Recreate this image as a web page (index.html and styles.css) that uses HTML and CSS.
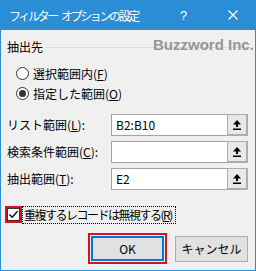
FILE: index.html
```html
<!DOCTYPE html>
<html lang="ja">
<head>
    <meta charset="UTF-8">
    <title>フィルター オプションの設定</title>
    <link rel="stylesheet" href="styles.css">
</head>
<body>
    <div class="dialog">
        <div class="titlebar">
            <span class="title">フィルター <span class="title-gap"></span>オプションの設定</span>
            <span class="help">?</span>
            <span class="close">
                <svg width="10" height="10" viewBox="0 0 10 10">
                    <path d="M0.5 0.5 L9.5 9.5 M9.5 0.5 L0.5 9.5" stroke="#fff" stroke-width="1.2" fill="none"/>
                </svg>
            </span>
        </div>

        <div class="content">
            <div class="group-head">
                <span>抽出先</span>
                <div class="group-line"></div>
            </div>
            <div class="watermark">Buzzword Inc.</div>

            <div class="radio-row">
                <span class="radio"></span>
                <span>選択範囲内(<u>F</u>)</span>
            </div>
            <div class="radio-row">
                <span class="radio checked"></span>
                <span>指定した範囲(<u>O</u>)</span>
            </div>

            <div class="fields">
                <div class="field-row">
                    <label class="field-label">リスト範囲(<u>L</u>):</label>
                    <div class="field-input">B2:B10</div>
                    <div class="ref-button">
                        <svg width="8" height="10" viewBox="0 0 8 10">
                            <polygon points="4,0 8,4.5 0,4.5" fill="#000"/>
                            <rect x="3" y="4" width="2" height="3" fill="#000"/>
                            <rect x="0" y="8.5" width="8" height="1.5" fill="#000"/>
                        </svg>
                    </div>
                </div>
                <div class="field-row">
                    <label class="field-label">検索条件範囲(<u>C</u>):</label>
                    <div class="field-input"></div>
                    <div class="ref-button">
                        <svg width="8" height="10" viewBox="0 0 8 10">
                            <polygon points="4,0 8,4.5 0,4.5" fill="#000"/>
                            <rect x="3" y="4" width="2" height="3" fill="#000"/>
                            <rect x="0" y="8.5" width="8" height="1.5" fill="#000"/>
                        </svg>
                    </div>
                </div>
                <div class="field-row">
                    <label class="field-label">抽出範囲(<u>T</u>):</label>
                    <div class="field-input">E2</div>
                    <div class="ref-button">
                        <svg width="8" height="10" viewBox="0 0 8 10">
                            <polygon points="4,0 8,4.5 0,4.5" fill="#000"/>
                            <rect x="3" y="4" width="2" height="3" fill="#000"/>
                            <rect x="0" y="8.5" width="8" height="1.5" fill="#000"/>
                        </svg>
                    </div>
                </div>
            </div>

            <div class="check-row">
                <div class="mark-box">
                    <span class="checkbox">
                        <svg width="11" height="11" viewBox="0 0 11 11">
                            <path d="M1.5 5.5 L4.2 8.2 L9.5 2.2" stroke="#000" stroke-width="1.3" fill="none"/>
                        </svg>
                    </span>
                </div>
                <span class="check-text">重複するレコードは無視する(<u>R</u>)</span>
            </div>

            <div class="buttons">
                <div class="mark-box">
                    <button class="btn btn-default">OK</button>
                </div>
                <button class="btn">キャンセル</button>
            </div>
        </div>
    </div>
</body>
</html>
```

FILE: styles.css
```css
body {
    margin: 0;
    font-family: "Noto Sans CJK JP", "Noto Sans", sans-serif;
    font-size: 12px;
    color: #000;
}
.dialog {
    width: 256px;
    height: 271px;
    box-sizing: border-box;
    border: 1px solid #2b8dd5;
    border-top: none;
    background-color: #f0f0f0;
    position: relative;
}
.titlebar {
    height: 30px;
    margin: 0 -1px;
    background-color: #2b8dd5;
    color: #fff;
    display: flex;
    align-items: center;
}
.title {
    flex: 1;
    padding-left: 9px;
    letter-spacing: -2.4px;
    white-space: nowrap;
}
.title-gap {
    display: inline-block;
    width: 4px;
}
.help {
    width: 10px;
    font-family: "Liberation Sans", sans-serif;
    font-size: 13px;
    margin-right: 38px;
}
.close {
    display: flex;
    margin-right: 18px;
}
.content {
    padding: 9px 5px 0 6px;
}
.group-head {
    display: flex;
    align-items: center;
    height: 16px;
    line-height: 16px;
}
.group-line {
    flex: 1;
    height: 1px;
    margin-left: 3px;
    background-color: #dcdcdc;
}
.watermark {
    position: absolute;
    left: 152px;
    top: 36px;
    font-family: "Liberation Sans", sans-serif;
    font-size: 15px;
    font-weight: bold;
    color: #959595;
    white-space: nowrap;
}
.group-head + .watermark + .radio-row {
    margin-top: 8px;
}
.radio-row {
    display: flex;
    align-items: center;
    height: 20px;
    padding-left: 9px;
}
.radio {
    width: 13px;
    height: 13px;
    box-sizing: border-box;
    border: 1px solid #333;
    border-radius: 50%;
    background-color: #fff;
    margin-right: 4px;
    display: flex;
    align-items: center;
    justify-content: center;
}
.radio.checked::after {
    content: "";
    width: 7px;
    height: 7px;
    border-radius: 50%;
    background-color: #333;
}
.fields {
    margin-top: 11px;
    display: flex;
    flex-direction: column;
    gap: 5px;
}
.field-row {
    display: flex;
    height: 22px;
}
.field-label {
    width: 104px;
    line-height: 22px;
    white-space: nowrap;
}
.field-input {
    width: 116px;
    box-sizing: border-box;
    border: 1px solid #a3a3a3;
    border-right: none;
    background-color: #fff;
    padding-left: 4px;
    line-height: 20px;
}
.ref-button {
    width: 21px;
    box-sizing: border-box;
    border: 1px solid #adadad;
    border-right-width: 2px;
    border-bottom-width: 2px;
    background-color: #e8e8e8;
    display: flex;
    align-items: center;
    justify-content: center;
}
.check-row {
    margin-top: 16px;
    margin-left: -2px;
    display: flex;
    align-items: center;
    height: 17px;
}
.mark-box {
    border: 2px solid #d3141c;
    padding: 1px;
    display: flex;
}
.check-row .mark-box {
    padding: 0;
}
.checkbox {
    width: 13px;
    height: 13px;
    box-sizing: border-box;
    border: 1px solid #333;
    background-color: #fff;
    display: flex;
    align-items: center;
    justify-content: center;
}
.check-text {
    height: 16px;
    line-height: 16px;
    border: 1px dotted #000;
    padding: 0 3px 0 1px;
    letter-spacing: -1.5px;
    white-space: nowrap;
}
.buttons {
    margin-top: 10px;
    display: flex;
    align-items: center;
    justify-content: flex-end;
    gap: 8px;
    padding-right: 2px;
}
.btn {
    width: 73px;
    height: 26px;
    box-sizing: border-box;
    border: 1px solid #adadad;
    background-color: #e1e1e1;
    font-family: "Noto Sans CJK JP", "Noto Sans", sans-serif;
    font-size: 12px;
    font-weight: normal;
    padding: 0;
    color: #000;
}
.btn-default {
    height: 25px;
    border: 2px solid #0078d7;
}
```
